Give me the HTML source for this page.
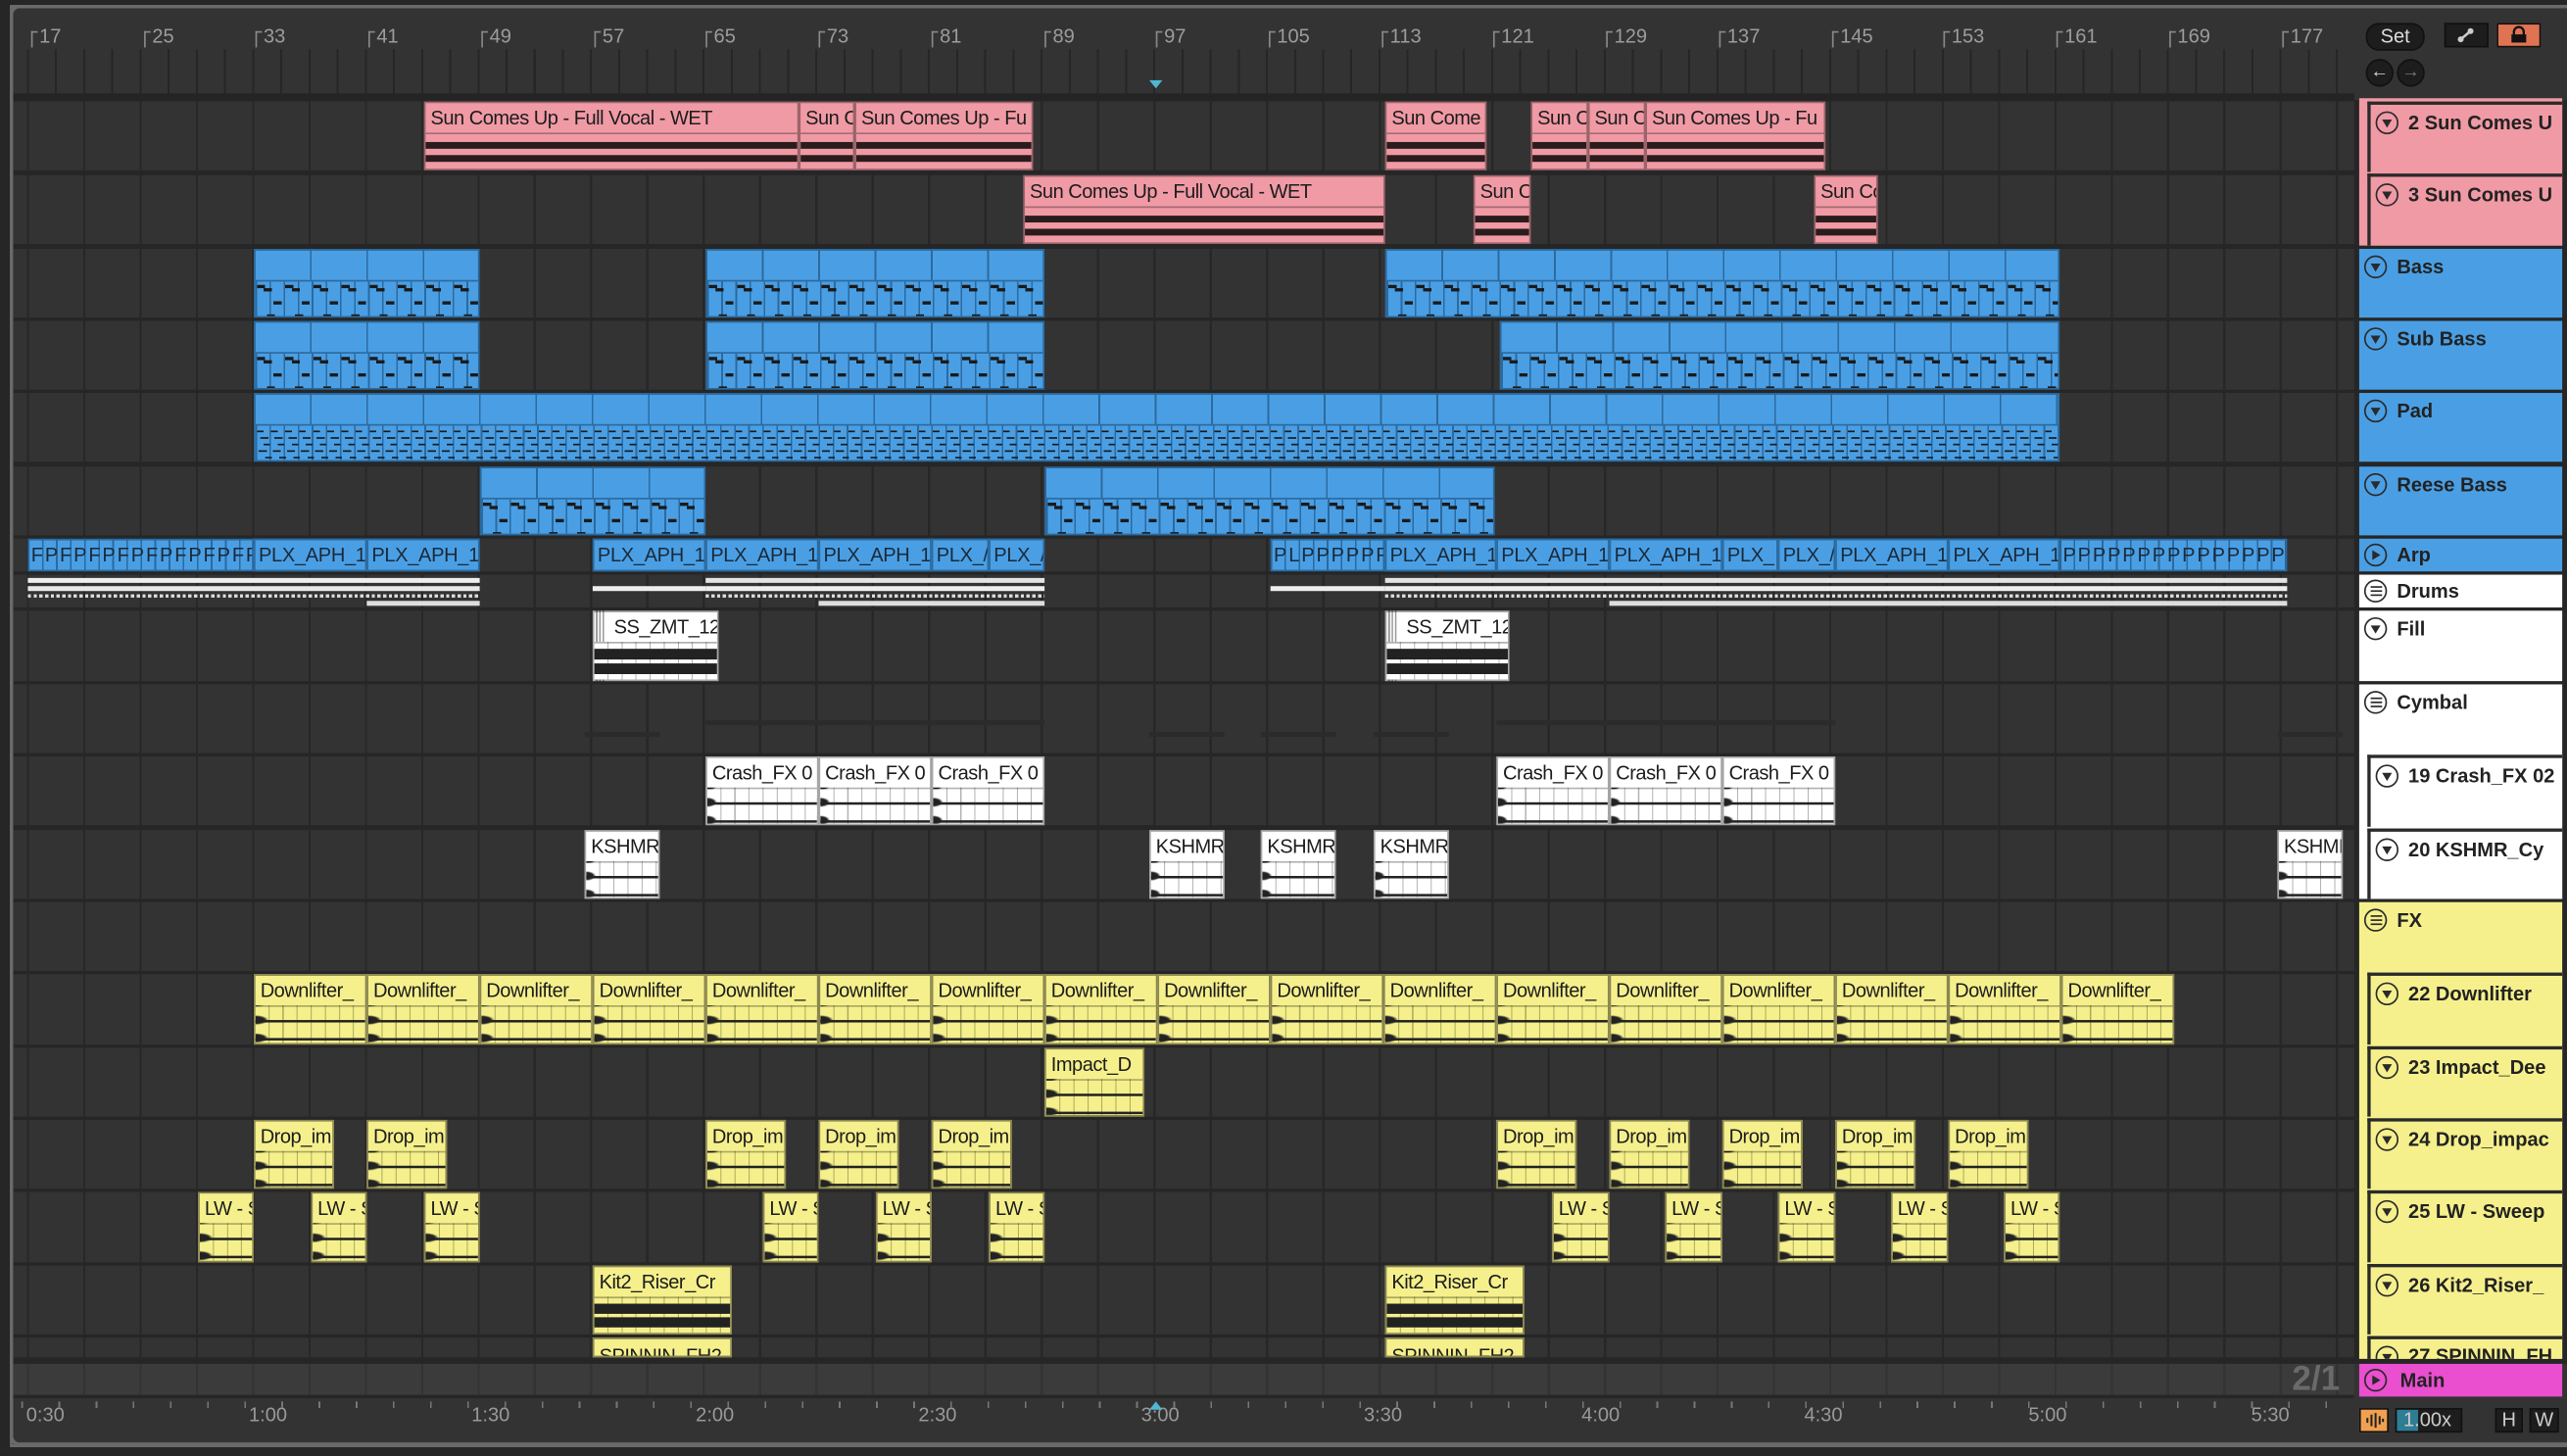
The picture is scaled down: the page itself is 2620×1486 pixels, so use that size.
<!DOCTYPE html>
<html><head><meta charset="utf-8">
<style>
html,body{margin:0;padding:0;background:#262626;width:2620px;height:1486px;overflow:hidden}
#s{position:absolute;left:0;top:0;width:1568px;height:889px;transform:scale(1.671);transform-origin:0 0;background:#262626;font-family:"Liberation Sans",sans-serif}
.abs{position:absolute}
#frame{position:absolute;left:6px;top:3px;width:1580px;height:880px;border:2px solid #6a6a6a;border-radius:6px;background:#333;box-sizing:border-box}
.rul{position:absolute;top:15px;font-size:12px;color:#9c9c9c;line-height:14px}
.rul::before{content:"";position:absolute;left:-5px;top:4px;width:3px;height:9px;border-left:1px solid #888;border-top:1px solid #888}
.r{position:absolute;left:0;width:1438px;background:repeating-linear-gradient(90deg,#333 0 16.4px,#272727 16.4px 17.8px,#333 17.8px 34.4px)}
.c{position:absolute;top:0;bottom:0;overflow:hidden;white-space:nowrap;font-size:12px;line-height:18px;letter-spacing:-0.3px;color:#1c1c1c;padding-left:3px;box-sizing:border-box;border:1px solid rgba(0,0,0,.35)}
.c::after{content:"";position:absolute;left:0;right:0;top:18px;bottom:0;border-top:1px solid rgba(0,0,0,.3)}
.p{background:#f09aa5}
.p::after{background:linear-gradient(#f09aa5 0 22%,#2a1c1c 22% 42%,#f09aa5 42% 60%,#2a1c1c 60% 80%,#f09aa5 80%)}
.b{background:repeating-linear-gradient(90deg,#4a9fe4 0 33.4px,#2c6aa0 33.4px 34.4px);border-color:#2a6aa0}
.b::after{top:18px;border-top:1px solid #2c6aa0;background:
repeating-linear-gradient(90deg,#1a1a1a 0 5px,transparent 5px 17.2px) 1px 2px/100% 2px no-repeat,
repeating-linear-gradient(90deg,#1a1a1a 0 5px,transparent 5px 17.2px) 5px 4px/100% 2px no-repeat,
repeating-linear-gradient(90deg,#1a1a1a 0 5px,transparent 5px 17.2px) 11px 12px/100% 2px no-repeat,
repeating-linear-gradient(90deg,#1a1a1a 0 5px,transparent 5px 17.2px) 7px 20px/100% 2px no-repeat,
repeating-linear-gradient(90deg,#2c6aa0 0 1px,transparent 1px 8.6px) #4a9fe4}
.pd::after{background:
repeating-linear-gradient(90deg,#1a1a1a 0 4px,transparent 4px 8.6px) 1px 3px/100% 1px no-repeat,
repeating-linear-gradient(90deg,#1a1a1a 0 5px,transparent 5px 8.6px) 3px 7px/100% 1px no-repeat,
repeating-linear-gradient(90deg,#1a1a1a 0 4px,transparent 4px 8.6px) 5px 11px/100% 1px no-repeat,
repeating-linear-gradient(90deg,#1a1a1a 0 5px,transparent 5px 8.6px) 2px 15px/100% 1px no-repeat,
repeating-linear-gradient(90deg,#1a1a1a 0 4px,transparent 4px 8.6px) 6px 19px/100% 1px no-repeat,
repeating-linear-gradient(90deg,#2c6aa0 0 1px,transparent 1px 8.6px) #4a9fe4}
.a{position:absolute;top:0;bottom:0;overflow:hidden;white-space:nowrap;background:#4a9fe4;border:1px solid #2a6aa0;box-sizing:border-box;font-size:12px;line-height:18px;color:#1a2a3a;padding-left:2px;letter-spacing:-0.2px}
.ps{letter-spacing:1.1px;padding-left:1px;background:repeating-linear-gradient(90deg,#4a9fe4 0 7.6px,#2a6aa0 7.6px 8.6px)}
.w{background:#fff}
.w::after{background:
radial-gradient(ellipse 6px 3px at 0 8px,#222 0 70%,transparent 100%),
radial-gradient(ellipse 6px 3px at 0 19px,#222 0 70%,transparent 100%),
linear-gradient(#222,#222) 0 7.5px/100% 1.5px no-repeat,
linear-gradient(#222,#222) 0 18.5px/100% 1.5px no-repeat,
repeating-linear-gradient(90deg,transparent 0 8px,rgba(0,0,0,.3) 8px 8.6px) #fff}
.wt::after{background:linear-gradient(transparent 0 15%,#222 15% 45%,transparent 45% 55%,#222 55% 85%,transparent 85%),repeating-linear-gradient(90deg,transparent 0 8px,rgba(0,0,0,.3) 8px 8.6px) #fff}
.y{background:#f5f08c;border-color:#8a8650}
.y::after{background:
radial-gradient(ellipse 8px 3px at 0 8px,#222 0 70%,transparent 100%),
radial-gradient(ellipse 8px 3px at 0 19px,#222 0 70%,transparent 100%),
linear-gradient(#222,#222) 0 7.5px/100% 1.5px no-repeat,
linear-gradient(#222,#222) 0 18.5px/100% 1.5px no-repeat,
repeating-linear-gradient(90deg,transparent 0 8px,rgba(100,100,40,.5) 8px 8.6px) #f5f08c}
.yt::after{background:linear-gradient(transparent 0 15%,#222 15% 45%,transparent 45% 55%,#222 55% 85%,transparent 85%),repeating-linear-gradient(90deg,transparent 0 8px,rgba(100,100,40,.5) 8px 8.6px) #f5f08c}
.h{position:absolute;box-sizing:border-box}
.ch{border-left:2px solid #2a2a2a;border-top:2px solid #2a2a2a}
.i{position:absolute;left:3px;top:4px;width:12px;height:12px;border:1.5px solid #2a2a2a;border-radius:50%}
.i::after{content:"";position:absolute;left:2.5px;top:4px;border-left:3.5px solid transparent;border-right:3.5px solid transparent;border-top:5px solid #2a2a2a}
.i.rt::after{left:4px;top:2.5px;border-top:3.5px solid transparent;border-bottom:3.5px solid transparent;border-left:5px solid #2a2a2a;border-right:0}
.i.ln::after{left:2.5px;top:3px;width:7px;height:1px;border:0;background:#2a2a2a;box-shadow:0 2.5px 0 #2a2a2a,0 5px 0 #2a2a2a}
.t{position:absolute;left:23px;top:3px;font-weight:bold;font-size:12px;line-height:16px;color:#222;white-space:nowrap;letter-spacing:0}
.dr{position:absolute;height:3px}
.bt{position:absolute;font-size:12px;color:#999}
</style></head><body>
<div id="s">
<div id="frame"></div>

<div class="abs" style="left:8px;top:30px;width:1430px;height:27px;background:repeating-linear-gradient(90deg,#333 0 8.4px,#262626 8.4px 9.6px,#333 9.6px 17.2px)"></div>
<div class="abs" style="left:8px;top:57px;width:1430px;height:4px;background:#242424"></div>
<div class="rul" style="left:24px">17</div><div class="rul" style="left:93px">25</div><div class="rul" style="left:161px">33</div><div class="rul" style="left:230px">41</div><div class="rul" style="left:299px">49</div><div class="rul" style="left:368px">57</div><div class="rul" style="left:436px">65</div><div class="rul" style="left:505px">73</div><div class="rul" style="left:574px">81</div><div class="rul" style="left:643px">89</div><div class="rul" style="left:711px">97</div><div class="rul" style="left:780px">105</div><div class="rul" style="left:849px">113</div><div class="rul" style="left:917px">121</div><div class="rul" style="left:986px">129</div><div class="rul" style="left:1055px">137</div><div class="rul" style="left:1124px">145</div><div class="rul" style="left:1192px">153</div><div class="rul" style="left:1261px">161</div><div class="rul" style="left:1330px">169</div><div class="rul" style="left:1399px">177</div>
<div class="abs" style="left:702px;top:49px;width:0;height:0;border-left:4px solid transparent;border-right:4px solid transparent;border-top:5px solid #4fb8d0"></div>

<div class="abs" style="left:8px;top:61px;width:1430px;height:772px;background:#262626"></div>

<div class="r" style="top:62px;height:42px">
<div class="c p" style="left:259px;width:229px">Sun Comes Up - Full Vocal - WET</div>
<div class="c p" style="left:488px;width:34px">Sun C</div>
<div class="c p" style="left:522px;width:109px">Sun Comes Up - Fu</div>
<div class="c p" style="left:846px;width:62px">Sun Come</div>
<div class="c p" style="left:935px;width:35px">Sun C</div>
<div class="c p" style="left:970px;width:35px">Sun C</div>
<div class="c p" style="left:1005px;width:110px">Sun Comes Up - Fu</div>
</div>
<div class="r" style="top:107px;height:42px">
<div class="c p" style="left:625px;width:221px">Sun Comes Up - Full Vocal - WET</div>
<div class="c p" style="left:900px;width:35px">Sun C</div>
<div class="c p" style="left:1108px;width:39px">Sun Co</div>
</div>
<div class="r" style="top:152px;height:42px">
<div class="c b" style="left:155px;width:138px"></div><div class="c b" style="left:431px;width:207px"></div><div class="c b" style="left:846px;width:412px"></div>
</div>
<div class="r" style="top:196px;height:42px">
<div class="c b" style="left:155px;width:138px"></div><div class="c b" style="left:431px;width:207px"></div><div class="c b" style="left:916px;width:342px"></div>
</div>
<div class="r" style="top:240px;height:42px">
<div class="c b pd" style="left:155px;width:1103px"></div>
</div>
<div class="r" style="top:285px;height:42px">
<div class="c b" style="left:293px;width:138px"></div><div class="c b" style="left:638px;width:275px"></div>
</div>
<div class="r" style="top:329px;height:20px">
<div class="a ps" style="left:17px;width:138px">FPFPFPFPFPFPFPFP</div>
<div class="a" style="left:155px;width:69px">PLX_APH_1</div>
<div class="a" style="left:224px;width:69px">PLX_APH_1</div>
<div class="a" style="left:362px;width:69px">PLX_APH_1</div>
<div class="a" style="left:431px;width:69px">PLX_APH_1</div>
<div class="a" style="left:500px;width:69px">PLX_APH_1</div>
<div class="a" style="left:569px;width:35px">PLX_/</div>
<div class="a" style="left:604px;width:34px">PLX_/</div>
<div class="a ps" style="left:776px;width:70px">PLPPPPPP</div>
<div class="a" style="left:846px;width:68px">PLX_APH_1</div>
<div class="a" style="left:914px;width:69px">PLX_APH_1</div>
<div class="a" style="left:983px;width:69px">PLX_APH_1</div>
<div class="a" style="left:1052px;width:34px">PLX_</div>
<div class="a" style="left:1086px;width:35px">PLX_/</div>
<div class="a" style="left:1121px;width:69px">PLX_APH_1</div>
<div class="a" style="left:1190px;width:68px">PLX_APH_1</div>
<div class="a ps" style="left:1258px;width:139px">PPPPPPPPPPPPPPPP</div>
</div>
<div class="r" style="top:351px;height:20px">
<div class="dr" style="left:17px;top:2px;width:276px;background:#eee"></div>
<div class="dr" style="left:17px;top:7px;width:276px;background:#e8e8e8"></div>
<div class="dr" style="left:17px;top:12px;width:276px;height:2px;background:repeating-linear-gradient(90deg,#ddd 0 2px,transparent 2px 3.5px)"></div>
<div class="dr" style="left:224px;top:16px;width:69px;background:#ddd"></div>
<div class="dr" style="left:362px;top:7px;width:69px;background:#eee"></div>
<div class="dr" style="left:431px;top:2px;width:207px;background:#e4e4e4"></div>
<div class="dr" style="left:431px;top:7px;width:207px;background:#eee"></div>
<div class="dr" style="left:431px;top:12px;width:207px;height:2px;background:repeating-linear-gradient(90deg,#ddd 0 2px,transparent 2px 3.5px)"></div>
<div class="dr" style="left:500px;top:16px;width:138px;background:#ddd"></div>
<div class="dr" style="left:776px;top:7px;width:70px;background:#eee"></div>
<div class="dr" style="left:846px;top:2px;width:551px;background:#e4e4e4"></div>
<div class="dr" style="left:846px;top:7px;width:551px;background:#eee"></div>
<div class="dr" style="left:846px;top:12px;width:551px;height:2px;background:repeating-linear-gradient(90deg,#ddd 0 2px,transparent 2px 3.5px)"></div>
<div class="dr" style="left:983px;top:16px;width:414px;background:#ddd"></div>
</div>
<div class="r" style="top:373px;height:43px">
<div class="c w wt" style="left:362px;width:77px;padding-left:12px;background:linear-gradient(90deg,#fff 0 1px,#999 1px 2px,#fff 2px 3px,#999 3px 4px,#fff 4px 5px,#999 5px 6px,#fff 6px)">SS_ZMT_12</div>
<div class="c w wt" style="left:846px;width:76px;padding-left:12px;background:linear-gradient(90deg,#fff 0 1px,#999 1px 2px,#fff 2px 3px,#999 3px 4px,#fff 4px 5px,#999 5px 6px,#fff 6px)">SS_ZMT_12</div>
</div>
<div class="r" style="top:418px;height:42px">
<div class="abs" style="left:357px;top:29px;width:46px;height:3px;background:#2b2b2b"></div>
<div class="abs" style="left:431px;top:22px;width:207px;height:3px;background:#2b2b2b"></div>
<div class="abs" style="left:702px;top:29px;width:46px;height:3px;background:#2b2b2b"></div>
<div class="abs" style="left:770px;top:29px;width:46px;height:3px;background:#2b2b2b"></div>
<div class="abs" style="left:839px;top:29px;width:46px;height:3px;background:#2b2b2b"></div>
<div class="abs" style="left:914px;top:22px;width:207px;height:3px;background:#2b2b2b"></div>
<div class="abs" style="left:1391px;top:29px;width:40px;height:3px;background:#2b2b2b"></div>
</div>
<div class="r" style="top:462px;height:42px">
<div class="c w" style="left:431px;width:69px">Crash_FX 0</div><div class="c w" style="left:500px;width:69px">Crash_FX 0</div><div class="c w" style="left:569px;width:69px">Crash_FX 0</div>
<div class="c w" style="left:914px;width:69px">Crash_FX 0</div><div class="c w" style="left:983px;width:69px">Crash_FX 0</div><div class="c w" style="left:1052px;width:69px">Crash_FX 0</div>
</div>
<div class="r" style="top:507px;height:42px">
<div class="c w" style="left:357px;width:46px">KSHMR</div><div class="c w" style="left:702px;width:46px">KSHMR</div><div class="c w" style="left:770px;width:46px">KSHMR</div><div class="c w" style="left:839px;width:46px">KSHMR</div><div class="c w" style="left:1391px;width:40px">KSHMR</div>
</div>
<div class="r" style="top:551px;height:42px"></div>
<div class="r" style="top:595px;height:43px">
<div class="c y" style="left:155px;width:69px">Downlifter_</div><div class="c y" style="left:224px;width:69px">Downlifter_</div><div class="c y" style="left:293px;width:69px">Downlifter_</div><div class="c y" style="left:362px;width:69px">Downlifter_</div><div class="c y" style="left:431px;width:69px">Downlifter_</div><div class="c y" style="left:500px;width:69px">Downlifter_</div><div class="c y" style="left:569px;width:69px">Downlifter_</div><div class="c y" style="left:638px;width:69px">Downlifter_</div><div class="c y" style="left:707px;width:69px">Downlifter_</div><div class="c y" style="left:776px;width:69px">Downlifter_</div><div class="c y" style="left:845px;width:69px">Downlifter_</div><div class="c y" style="left:914px;width:69px">Downlifter_</div><div class="c y" style="left:983px;width:69px">Downlifter_</div><div class="c y" style="left:1052px;width:69px">Downlifter_</div><div class="c y" style="left:1121px;width:69px">Downlifter_</div><div class="c y" style="left:1190px;width:69px">Downlifter_</div><div class="c y" style="left:1259px;width:69px">Downlifter_</div>
</div>
<div class="r" style="top:640px;height:42px">
<div class="c y" style="left:638px;width:61px">Impact_D</div>
</div>
<div class="r" style="top:684px;height:42px">
<div class="c y" style="left:155px;width:49px">Drop_im</div><div class="c y" style="left:224px;width:49px">Drop_im</div><div class="c y" style="left:431px;width:49px">Drop_im</div><div class="c y" style="left:500px;width:49px">Drop_im</div><div class="c y" style="left:569px;width:49px">Drop_im</div><div class="c y" style="left:914px;width:49px">Drop_im</div><div class="c y" style="left:983px;width:49px">Drop_im</div><div class="c y" style="left:1052px;width:49px">Drop_im</div><div class="c y" style="left:1121px;width:49px">Drop_im</div><div class="c y" style="left:1190px;width:49px">Drop_im</div>
</div>
<div class="r" style="top:728px;height:43px">
<div class="c y" style="left:121px;width:34px">LW - S</div><div class="c y" style="left:190px;width:34px">LW - S</div><div class="c y" style="left:259px;width:34px">LW - S</div><div class="c y" style="left:466px;width:34px">LW - S</div><div class="c y" style="left:535px;width:34px">LW - S</div><div class="c y" style="left:604px;width:34px">LW - S</div><div class="c y" style="left:948px;width:35px">LW - S</div><div class="c y" style="left:1017px;width:35px">LW - S</div><div class="c y" style="left:1086px;width:35px">LW - S</div><div class="c y" style="left:1155px;width:35px">LW - S</div><div class="c y" style="left:1224px;width:34px">LW - S</div>
</div>
<div class="r" style="top:773px;height:42px">
<div class="c y yt" style="left:362px;width:85px">Kit2_Riser_Cr</div>
<div class="c y yt" style="left:846px;width:85px">Kit2_Riser_Cr</div>
</div>
<div class="r" style="top:817px;height:12px">
<div class="c y" style="left:362px;width:85px;line-height:20px">SPINNIN_FH2</div>
<div class="c y" style="left:846px;width:85px;line-height:20px">SPINNIN_FH2</div>
</div>

<div class="abs" style="left:8px;top:830px;width:1430px;height:3px;background:#262626"></div>
<div class="abs" style="left:0;top:833px;width:1438px;height:19px;background:repeating-linear-gradient(90deg,#3b3b3b 0 16.4px,#333 16.4px 17.8px,#3b3b3b 17.8px 34.4px)"></div>
<div class="abs" style="left:1400px;top:831px;font-weight:bold;font-size:21px;color:#6a6a6a">2/1</div>
<div class="abs" style="left:8px;top:852px;width:1430px;height:2px;background:#262626"></div>

<div class="bt" style="left:16px;top:857px">0:30</div><div class="bt" style="left:152px;top:857px">1:00</div><div class="bt" style="left:288px;top:857px">1:30</div><div class="bt" style="left:425px;top:857px">2:00</div><div class="bt" style="left:561px;top:857px">2:30</div><div class="bt" style="left:697px;top:857px">3:00</div><div class="bt" style="left:833px;top:857px">3:30</div><div class="bt" style="left:966px;top:857px">4:00</div><div class="bt" style="left:1102px;top:857px">4:30</div><div class="bt" style="left:1239px;top:857px">5:00</div><div class="bt" style="left:1375px;top:857px">5:30</div>
<div class="abs" style="left:13px;top:856px;width:1425px;height:4px;background:repeating-linear-gradient(90deg,#777 0 1px,transparent 1px 22.7px)"></div>
<div class="abs" style="left:702px;top:856px;width:0;height:0;border-left:4px solid transparent;border-right:4px solid transparent;border-bottom:5px solid #4fb8d0"></div>

<div class="abs" style="left:0;top:0;width:6px;height:889px;background:#262626"></div>
<div class="abs" style="left:6px;top:4px;width:2px;height:878px;background:#6a6a6a"></div>

<div class="abs" style="left:1438px;top:61px;width:130px;height:772px;background:#262626"></div>
<div class="h" style="left:1441px;top:60px;width:124px;height:90px;background:#f09aa5"></div>
<div class="h ch" style="left:1446px;top:62px;width:119px;height:43px;background:#f09aa5"><span class="i"></span><span class="t">2 Sun Comes U</span></div>
<div class="h ch" style="left:1446px;top:106px;width:119px;height:44px;background:#f09aa5"><span class="i"></span><span class="t">3 Sun Comes U</span></div>
<div class="h" style="left:1441px;top:152px;width:124px;height:42px;background:#4a9fe4"><span class="i"></span><span class="t">Bass</span></div>
<div class="h" style="left:1441px;top:196px;width:124px;height:42px;background:#4a9fe4"><span class="i"></span><span class="t">Sub Bass</span></div>
<div class="h" style="left:1441px;top:240px;width:124px;height:42px;background:#4a9fe4"><span class="i"></span><span class="t">Pad</span></div>
<div class="h" style="left:1441px;top:285px;width:124px;height:42px;background:#4a9fe4"><span class="i"></span><span class="t">Reese Bass</span></div>
<div class="h" style="left:1441px;top:329px;width:124px;height:20px;background:#4a9fe4"><span class="i rt" style="top:3px"></span><span class="t" style="top:2px">Arp</span></div>
<div class="h" style="left:1441px;top:351px;width:124px;height:20px;background:#fff"><span class="i ln" style="top:3px"></span><span class="t" style="top:2px">Drums</span></div>
<div class="h" style="left:1441px;top:373px;width:124px;height:43px;background:#fff"><span class="i"></span><span class="t">Fill</span></div>
<div class="h" style="left:1441px;top:418px;width:124px;height:131px;background:#fff"><span class="i ln"></span><span class="t">Cymbal</span></div>
<div class="h ch" style="left:1446px;top:461px;width:119px;height:44px;background:#fff"><span class="i"></span><span class="t">19 Crash_FX 02</span></div>
<div class="h ch" style="left:1446px;top:506px;width:119px;height:43px;background:#fff"><span class="i"></span><span class="t">20 KSHMR_Cy</span></div>
<div class="h" style="left:1441px;top:551px;width:124px;height:279px;background:#f5f08c"><span class="i ln"></span><span class="t">FX</span></div>
<div class="h ch" style="left:1446px;top:594px;width:119px;height:44px;background:#f5f08c"><span class="i"></span><span class="t">22 Downlifter</span></div>
<div class="h ch" style="left:1446px;top:639px;width:119px;height:43px;background:#f5f08c"><span class="i"></span><span class="t">23 Impact_Dee</span></div>
<div class="h ch" style="left:1446px;top:683px;width:119px;height:43px;background:#f5f08c"><span class="i"></span><span class="t">24 Drop_impac</span></div>
<div class="h ch" style="left:1446px;top:727px;width:119px;height:44px;background:#f5f08c"><span class="i"></span><span class="t">25 LW - Sweep</span></div>
<div class="h ch" style="left:1446px;top:772px;width:119px;height:43px;background:#f5f08c"><span class="i"></span><span class="t">26 Kit2_Riser_</span></div>
<div class="h ch" style="left:1446px;top:816px;width:119px;height:14px;background:#f5f08c;overflow:hidden"><span class="i"></span><span class="t" style="top:2px">27 SPINNIN_FH</span></div>
<div class="abs" style="left:1438px;top:830px;width:130px;height:3px;background:#262626"></div>
<div class="h" style="left:1441px;top:833px;width:124px;height:20px;background:#e94fcf"><span class="i rt" style="top:3px"></span><span class="t" style="left:25px;top:2px">Main</span></div>

<div class="abs" style="left:1445px;top:14px;width:34px;height:15px;border-radius:8px;background:#1d1d1d;border:1px solid #111;color:#ddd;font-size:12px;line-height:15px;text-align:center">Set</div>
<div class="abs" style="left:1493px;top:14px;width:27px;height:15px;background:#1d1d1d;border:1px solid #111;box-sizing:border-box">
<svg width="27" height="15" viewBox="0 0 27 15" style="position:absolute;left:-1px;top:-1px"><line x1="10" y1="10" x2="16" y2="5" stroke="#ccc" stroke-width="1.5"/><circle cx="10" cy="10" r="1.8" fill="#ccc"/><circle cx="16" cy="5" r="1.8" fill="#ccc"/></svg></div>
<div class="abs" style="left:1525px;top:14px;width:27px;height:15px;background:#e07452;border:1px solid #111;box-sizing:border-box">
<svg width="27" height="15" viewBox="0 0 27 15" style="position:absolute;left:-1px;top:-1px"><path d="M10.5 7 V5.5 a3 3 0 0 1 6 0 V7" fill="none" stroke="#111" stroke-width="1.4"/><rect x="9" y="7" width="9" height="5" fill="#111"/></svg></div>
<div class="abs" style="left:1445px;top:36px;width:15px;height:15px;border-radius:50%;background:#1d1d1d;border:1px solid #111;color:#ddd;font-size:11px;line-height:15px;text-align:center">&#8592;</div>
<div class="abs" style="left:1464px;top:36px;width:15px;height:15px;border-radius:50%;background:#1d1d1d;border:1px solid #111;color:#777;font-size:11px;line-height:15px;text-align:center">&#8594;</div>

<div class="abs" style="left:1441px;top:860px;width:18px;height:15px;background:#f0a050;border:1px solid #111;box-sizing:border-box">
<svg width="18" height="15" viewBox="0 0 18 15" style="position:absolute;left:-1px;top:-1px"><g stroke="#222" stroke-width="1.2"><line x1="5" y1="6" x2="5" y2="9"/><line x1="7.5" y1="4" x2="7.5" y2="11"/><line x1="10" y1="3" x2="10" y2="12"/><line x1="12.5" y1="5" x2="12.5" y2="10"/><line x1="14.5" y1="6.5" x2="14.5" y2="8.5"/></g></svg></div>
<div class="abs" style="left:1463px;top:860px;width:41px;height:15px;background:linear-gradient(90deg,#2f7d94 0 13px,#1d1d1d 13px);border:1px solid #111;box-sizing:border-box;color:#ccc;font-size:12px;line-height:13px;padding-left:4px">1.00x</div>
<div class="abs" style="left:1524px;top:860px;width:17px;height:15px;background:#1d1d1d;border:1px solid #111;box-sizing:border-box;color:#ccc;font-size:12px;line-height:13px;text-align:center">H</div>
<div class="abs" style="left:1545px;top:860px;width:18px;height:15px;background:#1d1d1d;border:1px solid #111;box-sizing:border-box;color:#ccc;font-size:12px;line-height:13px;text-align:center">W</div>

<div class="abs" style="left:6px;top:882px;width:1562px;height:2px;background:#6a6a6a"></div>
<div class="abs" style="left:0;top:884px;width:1568px;height:5px;background:#262626"></div>
<div class="abs" style="left:6px;top:3px;width:1562px;height:2px;background:#6a6a6a"></div>
</div>
</body></html>
